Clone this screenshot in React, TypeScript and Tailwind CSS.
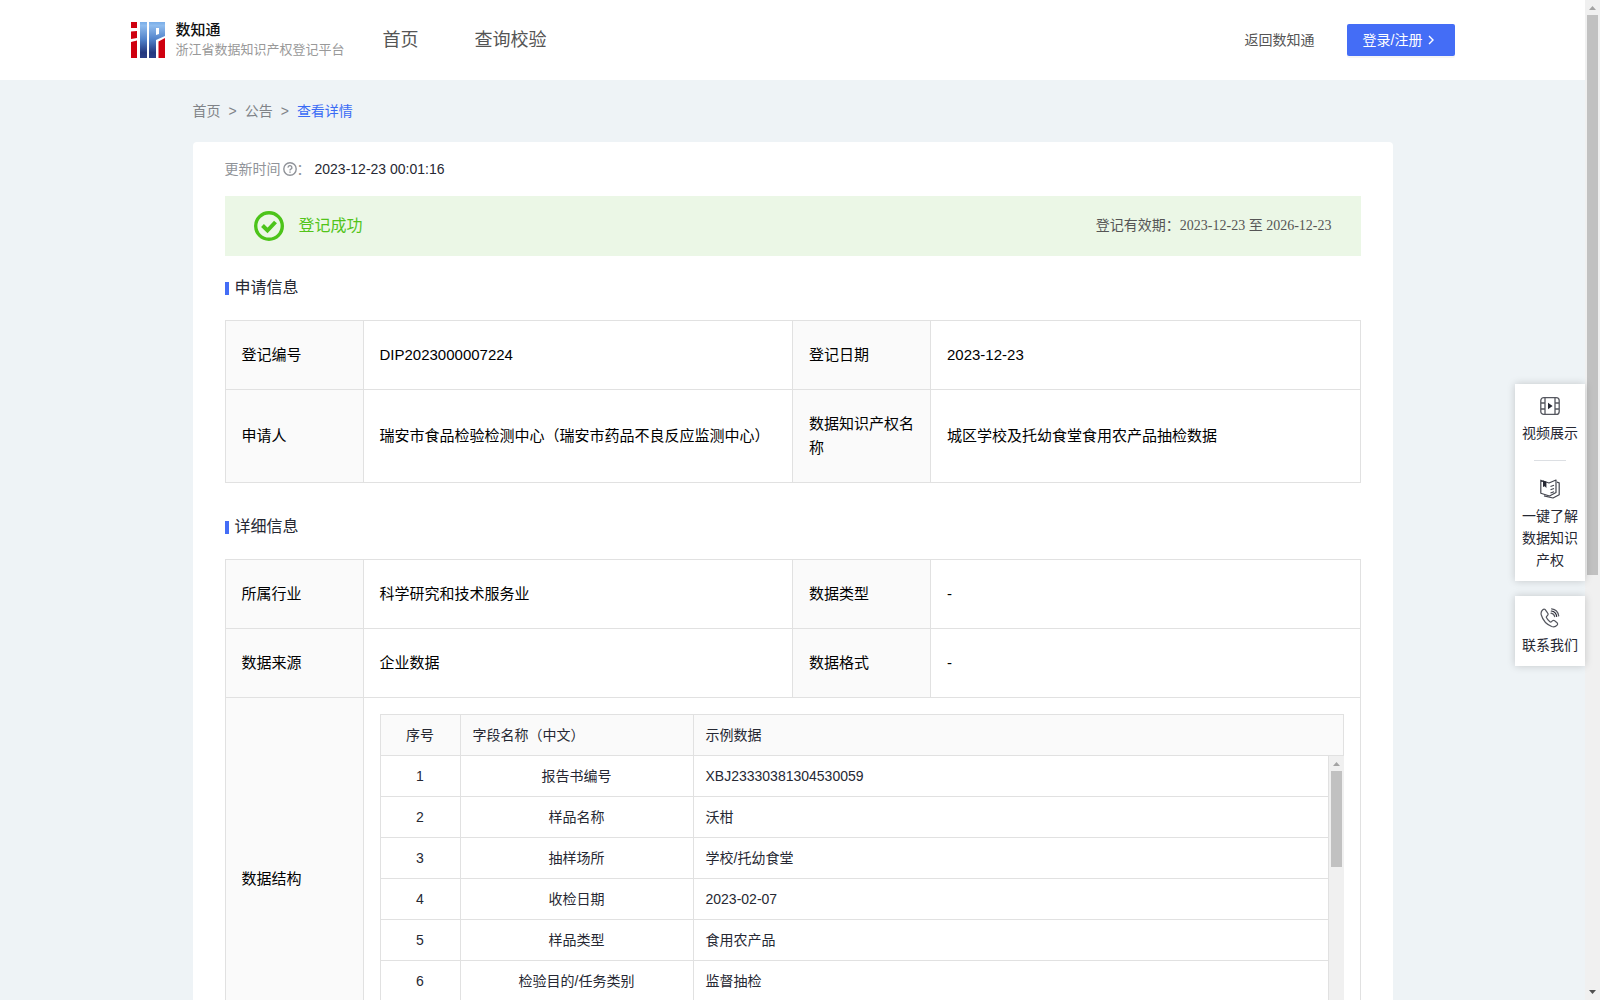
import type { ReactNode } from "react";

const FIELDS = [
  { name: "报告书编号", sample: "XBJ23330381304530059" },
  { name: "样品名称", sample: "沃柑" },
  { name: "抽样场所", sample: "学校/托幼食堂" },
  { name: "收检日期", sample: "2023-02-07" },
  { name: "样品类型", sample: "食用农产品" },
  { name: "检验目的/任务类别", sample: "监督抽检" },
];

export default function App() {
  return (
    <div className="relative flex h-screen overflow-hidden bg-[#eef3f6] [font-family:'Liberation_Sans','Noto_Sans_CJK_SC',sans-serif] text-sm text-[#262833]">
      <div className="min-w-0 flex-1 overflow-hidden">
        <Header />
        <main className="mx-auto w-full max-w-[1200px]">
          <Breadcrumb />
          <div className="rounded bg-white px-8 pt-4 pb-8">
            <div className="flex h-[22px] items-center">
              <span className="text-[#909399]">更新时间</span>
              <HelpIcon />
              <span className="text-[#909399]">：</span>
              <span className="ml-1">2023-12-23 00:01:16</span>
            </div>

            <div className="mt-4 flex h-[60px] items-center justify-between bg-[#ebf7e6] pr-[29px] pl-7">
              <div className="flex items-center gap-[14px]">
                <SuccessIcon />
                <span className="text-base text-[#52c41a]">登记成功</span>
              </div>
              <p className="[font-family:'Liberation_Serif','Noto_Sans_CJK_SC',serif] text-[#555]">
                登记有效期：2023-12-23 至 2026-12-23
              </p>
            </div>

            <SectionTitle className="mt-5">申请信息</SectionTitle>
            <InfoTable>
              <tr>
                <LabelCell>登记编号</LabelCell>
                <ValueCell>DIP2023000007224</ValueCell>
                <LabelCell>登记日期</LabelCell>
                <ValueCell>2023-12-23</ValueCell>
              </tr>
              <tr>
                <LabelCell>申请人</LabelCell>
                <ValueCell>瑞安市食品检验检测中心（瑞安市药品不良反应监测中心）</ValueCell>
                <LabelCell>数据知识产权名称</LabelCell>
                <ValueCell>城区学校及托幼食堂食用农产品抽检数据</ValueCell>
              </tr>
            </InfoTable>

            <SectionTitle className="mt-8">详细信息</SectionTitle>
            <InfoTable>
              <tr>
                <LabelCell>所属行业</LabelCell>
                <ValueCell>科学研究和技术服务业</ValueCell>
                <LabelCell>数据类型</LabelCell>
                <ValueCell>-</ValueCell>
              </tr>
              <tr>
                <LabelCell>数据来源</LabelCell>
                <ValueCell>企业数据</ValueCell>
                <LabelCell>数据格式</LabelCell>
                <ValueCell>-</ValueCell>
              </tr>
              <tr>
                <LabelCell>数据结构</LabelCell>
                <td colSpan={3} className="border border-[#e1e1e1] p-4">
                  <FieldTable />
                </td>
              </tr>
            </InfoTable>
          </div>
        </main>
      </div>

      <Scrollbar thumb="h-[560px]" bottomArrow />
      <SideTools />
    </div>
  );
}

function Header() {
  return (
    <header className="h-20 bg-white">
      <div className="mx-auto flex h-full w-full max-w-[1324px] items-center">
        <a href="#" className="flex items-center gap-[11px]">
          <Logo />
          <span className="flex flex-col">
            <span className="text-[15px] leading-5 font-medium text-[#111]">数知通</span>
            <span className="text-[13px] leading-5 text-[#999]">浙江省数据知识产权登记平台</span>
          </span>
        </a>
        <nav className="ml-[38px] flex gap-14 text-lg text-[#555]">
          <a href="#">首页</a>
          <a href="#">查询校验</a>
        </nav>
        <div className="ml-auto flex items-center gap-8">
          <a href="#" className="text-[#555]">
            返回数知通
          </a>
          <button className="flex h-8 w-[108px] items-center gap-1 rounded-xs bg-[#446df6] pl-4 text-white shadow-[0_2px_0_rgba(0,0,0,0.04)]">
            登录/注册
            <svg width="10" height="10" viewBox="0 0 10 10" fill="none" stroke="currentColor" strokeWidth="1.4">
              <path d="M3 1l4 4-4 4" />
            </svg>
          </button>
        </div>
      </div>
    </header>
  );
}

function Breadcrumb() {
  return (
    <nav className="flex h-[62px] items-center gap-2 text-[#808388]">
      <a href="#">首页</a>
      <span>&gt;</span>
      <a href="#">公告</a>
      <span>&gt;</span>
      <a href="#" className="text-[#3a6bf5]">
        查看详情
      </a>
    </nav>
  );
}

function SectionTitle({ className, children }: { className: string; children: ReactNode }) {
  return (
    <h2 className={`flex h-6 items-center gap-1.5 text-base ${className}`}>
      <span className="h-[13px] w-1 bg-[#446df6]" />
      {children}
    </h2>
  );
}

function InfoTable({ children }: { children: ReactNode }) {
  return (
    <table className="mt-5 w-full table-fixed border-collapse text-[15px] leading-6 text-black">
      <colgroup>
        <col className="w-[138px]" />
        <col />
        <col className="w-[138px]" />
        <col />
      </colgroup>
      <tbody>{children}</tbody>
    </table>
  );
}

function LabelCell({ children }: { children: ReactNode }) {
  return (
    <th className="border border-[#e1e1e1] bg-[#fafafa] px-4 py-[22px] text-left font-normal">{children}</th>
  );
}

function ValueCell({ children }: { children: ReactNode }) {
  return <td className="border border-[#e1e1e1] px-4 py-[22px]">{children}</td>;
}

function FieldCols() {
  return (
    <colgroup>
      <col className="w-20" />
      <col className="w-[233px]" />
      <col />
    </colgroup>
  );
}

function FieldTable() {
  return (
    <div className="text-sm text-[#262833]">
      <div className="border-t border-l border-[#e1e1e1]">
        <table className="w-full table-fixed border-separate border-spacing-0 bg-[#fafafa]">
          <FieldCols />
          <thead>
            <tr className="h-[41px] text-left">
              <th className="border-r border-b border-[#e1e1e1] text-center font-normal">序号</th>
              <th className="border-r border-b border-[#e1e1e1] px-3 font-normal">字段名称（中文）</th>
              <th className="border-r border-b border-[#e1e1e1] px-3 font-normal">示例数据</th>
            </tr>
          </thead>
        </table>
      </div>
      <div className="flex h-[287px] overflow-hidden">
        <div className="min-w-0 flex-1 border-l border-[#e1e1e1]">
          <table className="w-full table-fixed border-separate border-spacing-0">
            <FieldCols />
            <tbody>
              {FIELDS.map((f, i) => (
                <tr key={f.name} className="h-[41px]">
                  <td className="border-r border-b border-[#e1e1e1] text-center">{i + 1}</td>
                  <td className="border-r border-b border-[#e1e1e1] text-center">{f.name}</td>
                  <td className="border-r border-b border-[#e1e1e1] px-3">{f.sample}</td>
                </tr>
              ))}
            </tbody>
          </table>
        </div>
        <Scrollbar thumb="h-24" />
      </div>
    </div>
  );
}

function Scrollbar({ thumb, bottomArrow = false }: { thumb: string; bottomArrow?: boolean }) {
  return (
    <div className="flex w-[15px] shrink-0 flex-col items-center bg-[#f0f0f0]">
      <svg className="h-[15px] w-[15px] shrink-0" viewBox="0 0 15 15" fill="#a3a3a3">
        <path d="M4 10h7L7.5 6z" />
      </svg>
      <div className={`w-[11px] shrink-0 bg-[#c1c1c1] ${thumb}`} />
      {bottomArrow && (
        <svg className="mt-auto h-[15px] w-[15px] shrink-0" viewBox="0 0 15 15" fill="#505050">
          <path d="M4 5h7L7.5 9z" />
        </svg>
      )}
    </div>
  );
}

function SideTools() {
  return (
    <aside className="absolute top-96 right-[15px] flex w-[70px] flex-col gap-[15px] text-center leading-[22px]">
      <div className="flex flex-col items-center bg-white px-[7px] pt-3 pb-2.5 shadow-[0_0_8px_rgba(0,0,0,0.18)]">
        <a href="#" className="flex flex-col items-center gap-1.5">
          <VideoIcon />
          视频展示
        </a>
        <hr className="mt-4 w-8 border-[#dcdfe3]" />
        <a href="#" className="mt-[18px] flex flex-col items-center gap-1.5">
          <BookIcon />
          一键了解数据知识产权
        </a>
      </div>
      <div className="flex flex-col items-center bg-white px-[7px] pt-3 pb-2.5 shadow-[0_0_8px_rgba(0,0,0,0.18)]">
        <a href="#" className="flex flex-col items-center gap-1.5">
          <PhoneIcon />
          联系我们
        </a>
      </div>
    </aside>
  );
}

function Logo() {
  return (
    <svg width="34" height="36" viewBox="0 0 34 36">
      <defs>
        <linearGradient id="logo-blue" gradientUnits="userSpaceOnUse" x1="0" y1="0" x2="0" y2="36">
          <stop offset="0" stopColor="#78ade8" />
          <stop offset="0.1" stopColor="#8fbcee" />
          <stop offset="0.5" stopColor="#4f80c8" />
          <stop offset="0.85" stopColor="#24387f" />
          <stop offset="1" stopColor="#2c3f88" />
        </linearGradient>
      </defs>
      <path fill="#cf000f" d="M0 0h6v6H0zM0 9.500l6-.5v7l-6 1zM0 20l6-1.500V36H0z" />
      <path fill="url(#logo-blue)" d="M9 0h7v36H9z" />
      <path fill="url(#logo-blue)" fillRule="evenodd" d="M18 0h16v14l-9 4v18h-7zM25 6v7l3-1V6z" />
      <path fill="#cf000f" d="M27.500 19.500L34 16v20h-6.500z" />
    </svg>
  );
}

function HelpIcon() {
  return (
    <svg className="ml-0.5" width="14" height="14" viewBox="0 0 14 14" fill="none" stroke="#909399" strokeWidth="1.4">
      <circle cx="7" cy="7" r="6.2" />
      <path d="M5.1 5.6a1.9 1.9 0 1 1 2.8 1.6c-.6.3-.9.6-.9 1.2" />
      <path d="M7 9.5v1.2" />
    </svg>
  );
}

function SuccessIcon() {
  return (
    <svg width="32" height="32" viewBox="0 0 32 32" fill="none" stroke="#4cc41a">
      <circle cx="16" cy="16" r="13.3" strokeWidth="3.4" />
      <path d="M9.500 15.500l5 5 8-8.500" strokeWidth="4" />
    </svg>
  );
}

function VideoIcon() {
  return (
    <svg width="20" height="20" viewBox="0 0 20 20" fill="none" stroke="#55575f" strokeWidth="1.3">
      <rect x="0.8" y="1.6" width="18.4" height="16.8" rx="3" />
      <path d="M5 1.600v16.800M15 1.600v16.800M1 7h4M1 13h4M15 7h4M15 13h4" />
      <path d="M8 6.800v6.400l4.600-3.200z" fill="#262833" stroke="none" />
    </svg>
  );
}

function BookIcon() {
  return (
    <svg width="20" height="20" viewBox="0 0 20 20" fill="none" stroke="#44464f" strokeWidth="1.2" strokeLinejoin="round">
      <path d="M.8 1.200L9 4l7-3v12.500L9.500 17 .8 14.200z" />
      <path d="M17 3.200l2.200.6v12L13 19l-9-2.200M10.500 7.500L14 6.200M10.500 10.800L14 9.500M10.500 14L14 12.700" />
      <path d="M3 1.600l3.400 1.200V9L4.700 7.200 3 8z" fill="#262833" stroke="none" />
    </svg>
  );
}

function PhoneIcon() {
  return (
    <svg width="20" height="20" viewBox="0 0 20 20" fill="none" stroke="#55575f" strokeWidth="1.2" strokeLinecap="round" strokeLinejoin="round">
      <path d="M5.200 1.600c-.8-.6-1.700-.4-2.400.2C1.200 3.200.7 5 1.300 7c1.600 5.400 5.200 9.400 10.400 11.500 2.200.8 4 .3 5.400-1.300.7-.8.7-1.800-.1-2.500l-2.300-1.900c-.8-.7-1.700-.6-2.400.1l-.9.9c-.5.4-1 .4-1.500 0-1.500-1.100-2.700-2.500-3.500-4.200-.2-.5-.1-.9.3-1.300l.8-.8c.7-.7.8-1.500.2-2.300z" />
      <path d="M11 5.200c1.900.2 3.300 1.500 3.700 3.500M11.600.9c3.800.5 6.500 3.100 7.100 6.900" />
      <path d="M11.300 3c2.900.4 4.900 2.400 5.400 5.300" stroke="#262833" />
    </svg>
  );
}
